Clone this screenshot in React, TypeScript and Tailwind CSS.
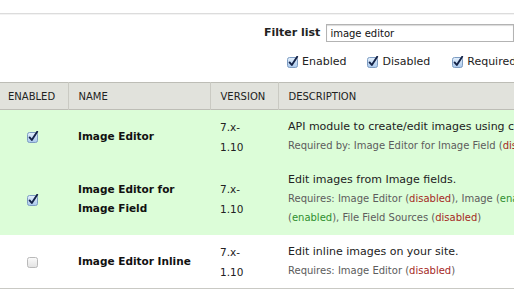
import React from "react";

const Check = ({ checked = true }: { checked?: boolean }) => (
  <svg width="12" height="12" viewBox="0 0 12 12" className="inline-block">
    <defs>
      <linearGradient id={checked ? "cbOn" : "cbOff"} x1="0" y1="0" x2="0" y2="1">
        <stop offset="0" stopColor={checked ? "#e4f0fc" : "#fbfbfb"} />
        <stop offset="1" stopColor={checked ? "#a9c8ec" : "#e2e2e2"} />
      </linearGradient>
    </defs>
    <rect
      x="0.5"
      y="1.5"
      width="10"
      height="10"
      rx="2"
      fill={`url(#${checked ? "cbOn" : "cbOff"})`}
      stroke={checked ? "#7d9cc2" : "#b9b9b9"}
    />
    {checked && (
      <path d="M2.6 6.4 L4.8 9 L10.2 0.8" fill="none" stroke="#142348" strokeWidth="1.9" strokeLinecap="round" strokeLinejoin="round" />
    )}
  </svg>
);

const Dis = () => <span className="text-[#a52a1f]">disabled</span>;
const En = () => <span className="text-[#2f8f2f]">enabled</span>;

const rows = [
  {
    name: "Image Editor",
    enabled: true,
    desc: "API module to create/edit images using client-side editors.",
    req: (
      <>
        Required by: Image Editor for Image Field (<Dis />)
      </>
    ),
  },
  {
    name: "Image Editor for Image Field",
    enabled: true,
    desc: "Edit images from Image fields.",
    req: (
      <>
        Requires: Image Editor (<Dis />), Image (<En />), File
        <br />(<En />), File Field Sources (<Dis />)
      </>
    ),
  },
  {
    name: "Image Editor Inline",
    enabled: false,
    desc: "Edit inline images on your site.",
    req: (
      <>
        Requires: Image Editor (<Dis />)
      </>
    ),
  },
];

export default function App() {
  return (
    <div className="w-[514px] h-[289px] overflow-hidden bg-white font-['DejaVu_Sans',sans-serif] text-[#222]">
      <div className="h-[13px]" />
      <div className="h-[2px] border-t border-[#dcdcdc] bg-[#f3f3f3]" />

      <div className="flex items-center pl-[264px] pt-[9px] h-[27px]">
        <label className="text-[11px] font-bold text-[#222] whitespace-nowrap">Filter list</label>
        <div className="ml-[6px] h-[18px] w-[260px] border border-[#b3b3b3] shadow-[inset_0_1px_1px_rgba(0,0,0,0.15)] flex items-center pl-[3px] text-[10px] text-[#111]">
          image editor
        </div>
      </div>

      <div className="flex items-center pl-[287px] pt-[11px] h-[29px] text-[11px] whitespace-nowrap">
        <span className="flex items-center gap-[3px]">
          <Check />
          Enabled
        </span>
        <span className="flex items-center gap-[3px] ml-[21px]">
          <Check />
          Disabled
        </span>
        <span className="flex items-center gap-[3px] ml-[22px]">
          <Check />
          Required
        </span>
      </div>

      <div className="mt-[11px]">
        <table className="table-fixed border-collapse w-[700px] text-left">
          <thead>
            <tr className="bg-[#e1e2dc] h-[27px] border-t border-b border-[#bdbdb6] text-[10px] font-normal text-[#222]">
              <th className="w-[68px] pl-[8px] font-normal border-r border-[#cacac3]">ENABLED</th>
              <th className="w-[142px] pl-[10px] font-normal border-r border-[#cacac3]">NAME</th>
              <th className="w-[68px] pl-[10px] font-normal border-r border-[#cacac3]">VERSION</th>
              <th className="pl-[10px] font-normal">DESCRIPTION</th>
            </tr>
          </thead>
          <tbody>
            {rows.map((r) => (
              <tr key={r.name} className={r.enabled ? "bg-[#dcfdd8]" : "bg-white border-b-2 border-[#c9c9c4]"}>
                <td className="align-middle text-center pr-[3px]">
                  <Check checked={r.enabled} />
                </td>
                <td className="align-middle pl-[10px] pr-[14px] text-[10.5px] font-bold leading-[19px] text-[#111]">
                  {r.name}
                </td>
                <td className="align-middle pl-[10px] text-[10.5px] leading-[20px]">
                  7.x-
                  <br />
                  1.10
                </td>
                <td className="align-top pl-[10px] py-[8px] whitespace-nowrap">
                  <div className="text-[11px] leading-[18px]">{r.desc}</div>
                  <div className="text-[10px] leading-[19px] text-[#5c5c5c]">{r.req}</div>
                </td>
              </tr>
            ))}
          </tbody>
        </table>
      </div>
    </div>
  );
}
